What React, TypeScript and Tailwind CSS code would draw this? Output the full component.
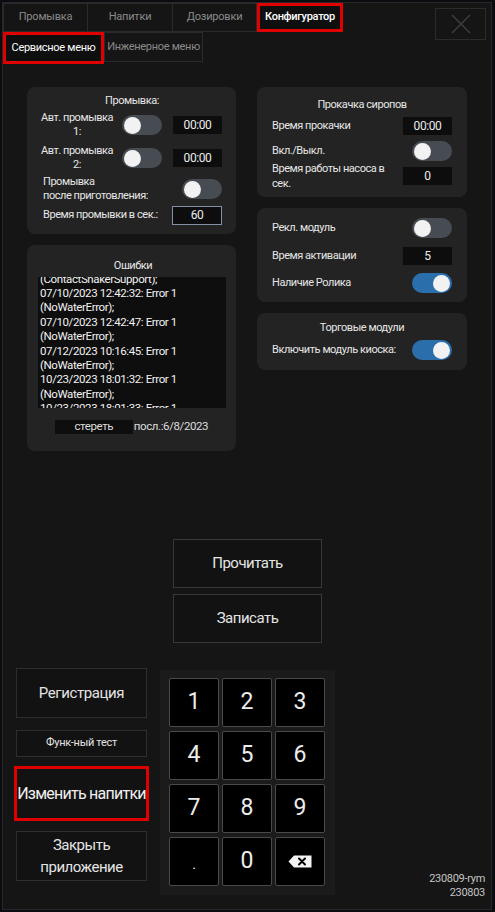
import React from "react";

function Toggle({ on = false }: { on?: boolean }) {
  return (
    <div
      className={
        on
          ? "w-[40px] h-[20px] rounded-full bg-[#2a6fab] flex items-center justify-end px-[2px] shrink-0"
          : "w-[40px] h-[20px] rounded-full bg-[#474b52] flex items-center justify-start px-[2px] shrink-0"
      }
    >
      <div className="w-[17px] h-[17px] rounded-full bg-[#f2f2f2]" />
    </div>
  );
}

function Field({ value, focused = false }: { value: string; focused?: boolean }) {
  return (
    <div
      className={
        focused
          ? "w-[50px] h-[19px] bg-[#0d0d0d] border border-[#8590a6] flex items-center justify-center text-[12px] tracking-[-0.4px] text-[#ececec] shrink-0"
          : "w-[49px] h-[18px] bg-[#0d0d0d] flex items-center justify-center text-[12px] tracking-[-0.4px] text-[#ececec] shrink-0"
      }
    >
      {value}
    </div>
  );
}

function Tab({ label, active = false, w }: { label: string; active?: boolean; w: string }) {
  return (
    <div
      className={
        active
          ? `${w} h-[29px] border-[3px] border-[#e00000] bg-[#0f0f0f] flex items-center justify-center text-[11px] tracking-[-0.3px] font-medium text-white whitespace-nowrap`
          : `${w} h-[29px] border border-[#2b2b2b] -ml-px first:ml-0 flex items-center justify-center text-[11px] tracking-[-0.2px] text-[#8a8a8a] whitespace-nowrap`
      }
    >
      {label}
    </div>
  );
}

const errorLines = [
  "(ContactShakerSupport);",
  "07/10/2023 12:42:32: Error 1",
  "(NoWaterError);",
  "07/10/2023 12:42:47: Error 1",
  "(NoWaterError);",
  "07/12/2023 10:16:45: Error 1",
  "(NoWaterError);",
  "10/23/2023 18:01:32: Error 1",
  "(NoWaterError);",
  "10/23/2023 18:01:33: Error 1",
];

function Key({ children }: { children: React.ReactNode }) {
  return (
    <div className="w-[50px] h-[49px] bg-black border border-[#4a4a4a] rounded-[2px] flex items-center justify-center text-[23px] text-[#ececec]">
      {children}
    </div>
  );
}

function BackspaceIcon() {
  return (
    <svg width="24" height="13" viewBox="0 0 24 13">
      <path d="M6 0.5 H23.5 V12.5 H6 L0.5 6.5 Z" fill="#f4f4f4" />
      <path d="M11 3.5 L17 9.5 M17 3.5 L11 9.5" stroke="#000" strokeWidth="2" strokeLinecap="round" />
    </svg>
  );
}

export default function App() {
  return (
    <div className="w-[495px] h-[912px] bg-[#0b0c10] p-[2px] pr-[3px] font-['Roboto',sans-serif] overflow-hidden">
      <div className="w-[490px] h-[908px] border border-[#272727] bg-[#151515] flex flex-col">
        {/* header: section tabs and close */}
        <div className="flex justify-between">
          <div className="flex flex-col">
            <div className="flex">
              <Tab label="Промывка" w="w-[85px]" />
              <Tab label="Напитки" w="w-[86px]" />
              <Tab label="Дозировки" w="w-[85px]" />
              <Tab label="Конфигуратор" w="w-[86px]" active />
            </div>
            <div className="flex">
              <div className="w-[101px] h-[32px] border-[3px] border-[#e00000] bg-[#0f0f0f] flex items-center justify-center text-[11px] tracking-[-0.3px] text-white whitespace-nowrap">
                Сервисное меню
              </div>
              <div className="w-[99px] h-[30px] border border-[#2b2b2b] flex items-center justify-center text-[11px] tracking-[-0.3px] text-[#8a8a8a] whitespace-nowrap">
                Инженерное меню
              </div>
            </div>
          </div>
          <div className="mt-[5px] mr-[5px] w-[51px] h-[32px] border border-[#2c2c2c] flex items-center justify-center">
            <svg width="20" height="20" viewBox="0 0 20 20">
              <path d="M1 1 L19 19 M19 1 L1 19" stroke="#3e3e3e" strokeWidth="1.5" />
            </svg>
          </div>
        </div>

        {/* settings panels */}
        <div className="flex mt-[23px] ml-[24px] gap-[21px] items-start text-[11px] tracking-[-0.45px] text-[#e6e6e6] whitespace-nowrap">
          <div className="flex flex-col gap-[11px] w-[209px]">
            <div className="h-[147px] rounded-[8px] bg-[#232323] pt-[7px] pl-[13px] pr-[14px] flex flex-col">
              <div className="h-[14px] leading-[14px] text-center pl-[2px]">Промывка:</div>
              <div className="flex items-center h-[28px] mt-[3px]">
                <div className="w-[74px] text-center leading-[14px]">
                  Авт. промывка
                  <br />
                  1:
                </div>
                <div className="ml-[8px]"><Toggle /></div>
                <div className="ml-[11px]"><Field value="00:00" /></div>
              </div>
              <div className="flex items-center h-[28px] mt-[5px]">
                <div className="w-[74px] text-center leading-[14px]">
                  Авт. промывка
                  <br />
                  2:
                </div>
                <div className="ml-[8px]"><Toggle /></div>
                <div className="ml-[11px]"><Field value="00:00" /></div>
              </div>
              <div className="flex items-center justify-between h-[28px] mt-[3px] pl-[3px]">
                <div className="leading-[14px]">
                  Промывка
                  <br />
                  после приготовления:
                </div>
                <Toggle />
              </div>
              <div className="flex items-center justify-between h-[20px] mt-[2px] pl-[3px]">
                <div>Время промывки в сек.:</div>
                <Field value="60" focused />
              </div>
            </div>

            <div className="h-[206px] rounded-[8px] bg-[#232323] pt-[14px] pl-[11px] pr-[10px] flex flex-col">
              <div className="h-[14px] leading-[14px] text-center pl-[2px]">Ошибки</div>
              <div className="mt-[4px] h-[131px] bg-[#0e0e0e] overflow-hidden pl-[2px]">
                <div className="-mt-[5.5px] text-[11.5px] tracking-[-0.4px] leading-[14.4px] text-[#f2f2f2]">
                  {errorLines.map((l, i) => (
                    <div key={i}>{l}</div>
                  ))}
                </div>
              </div>
              <div className="mt-[10px] flex items-center justify-center pr-[1px] text-[11.5px] tracking-[-0.4px]">
                <div className="w-[78px] h-[14px] bg-[#0e0e0e] flex items-center justify-center text-[#dcdcdc]">
                  стереть
                </div>
                <div className="ml-[1px] text-[#dcdcdc]">посл.:6/8/2023</div>
              </div>
            </div>
          </div>

          <div className="flex flex-col gap-[11px] w-[210px]">
            <div className="h-[110px] rounded-[8px] bg-[#232323] pt-[11px] px-[15px] flex flex-col">
              <div className="h-[14px] leading-[14px] text-center">Прокачка сиропов</div>
              <div className="flex items-center justify-between h-[18px] mt-[5px]">
                <div>Время прокачки</div>
                <Field value="00:00" />
              </div>
              <div className="flex items-center justify-between h-[20px] mt-[6px]">
                <div>Вкл./Выкл.</div>
                <Toggle />
              </div>
              <div className="flex items-center justify-between h-[30px]">
                <div className="leading-[15px]">
                  Время работы насоса в
                  <br />
                  сек.
                </div>
                <Field value="0" />
              </div>
            </div>

            <div className="h-[94px] rounded-[8px] bg-[#232323] pt-[10px] px-[15px] flex flex-col">
              <div className="flex items-center justify-between h-[20px]">
                <div>Рекл. модуль</div>
                <Toggle />
              </div>
              <div className="flex items-center justify-between h-[18px] mt-[9px]">
                <div>Время активации</div>
                <Field value="5" />
              </div>
              <div className="flex items-center justify-between h-[20px] mt-[8px]">
                <div>Наличие Ролика</div>
                <Toggle on />
              </div>
            </div>

            <div className="h-[57px] rounded-[8px] bg-[#232323] pt-[8px] px-[15px] flex flex-col">
              <div className="h-[14px] leading-[14px] text-center">Торговые модули</div>
              <div className="flex items-center justify-between h-[20px] mt-[5px]">
                <div>Включить модуль киоска:</div>
                <Toggle on />
              </div>
            </div>
          </div>
        </div>

        {/* read / write */}
        <div className="mt-[88px] ml-[170px] w-[149px] flex flex-col gap-[6px] text-[15px] tracking-[-0.5px] text-[#e4e4e4]">
          <div className="h-[49px] border border-[#383838] bg-[#121212] flex items-center justify-center">
            Прочитать
          </div>
          <div className="h-[49px] border border-[#383838] bg-[#121212] flex items-center justify-center">
            Записать
          </div>
        </div>

        {/* actions, keypad, build info */}
        <div className="mt-[25px] flex items-start h-[233px]">
          <div className="ml-[13px] w-[131px] flex flex-col text-[#e4e4e4]">
            <div className="h-[50px] border border-[#2e2e2e] bg-[#121212] flex items-center justify-center text-[15px] tracking-[-0.4px]">
              Регистрация
            </div>
            <div className="mt-[12px] h-[27px] border border-[#2e2e2e] bg-[#121212] flex items-center justify-center text-[11px] tracking-[-0.3px]">
              Функ-ный тест
            </div>
            <div className="mt-[9px] -mx-[2px] h-[55px] border-[3px] border-[#e00000] bg-[#121212] flex items-center justify-center text-[16px] tracking-[-0.75px] text-[#f0f0f0] whitespace-nowrap">
              Изменить напитки
            </div>
            <div className="mt-[10px] h-[50px] border border-[#2e2e2e] bg-[#121212] flex items-center justify-center text-center text-[15px] tracking-[-0.5px] leading-[22px]">
              Закрыть
              <br />
              приложение
            </div>
          </div>

          <div className="ml-[13px] mt-[2px] w-[175px] h-[225px] bg-[#1b1b1b] pt-[8px] pl-[9px]">
            <div className="grid grid-cols-[50px_50px_50px] gap-x-[3px] gap-y-[4px]">
              <Key>1</Key>
              <Key>2</Key>
              <Key>3</Key>
              <Key>4</Key>
              <Key>5</Key>
              <Key>6</Key>
              <Key>7</Key>
              <Key>8</Key>
              <Key>9</Key>
              <Key>
                <span className="text-[14px] mt-[6px]">.</span>
              </Key>
              <Key>0</Key>
              <Key>
                <BackspaceIcon />
              </Key>
            </div>
          </div>

          <div className="ml-auto self-end mr-[6px] mb-[1px] text-right text-[11px] tracking-[-0.3px] leading-[14px] text-[#c4c4c4]">
            230809-rym
            <br />
            230803
          </div>
        </div>
      </div>
    </div>
  );
}
